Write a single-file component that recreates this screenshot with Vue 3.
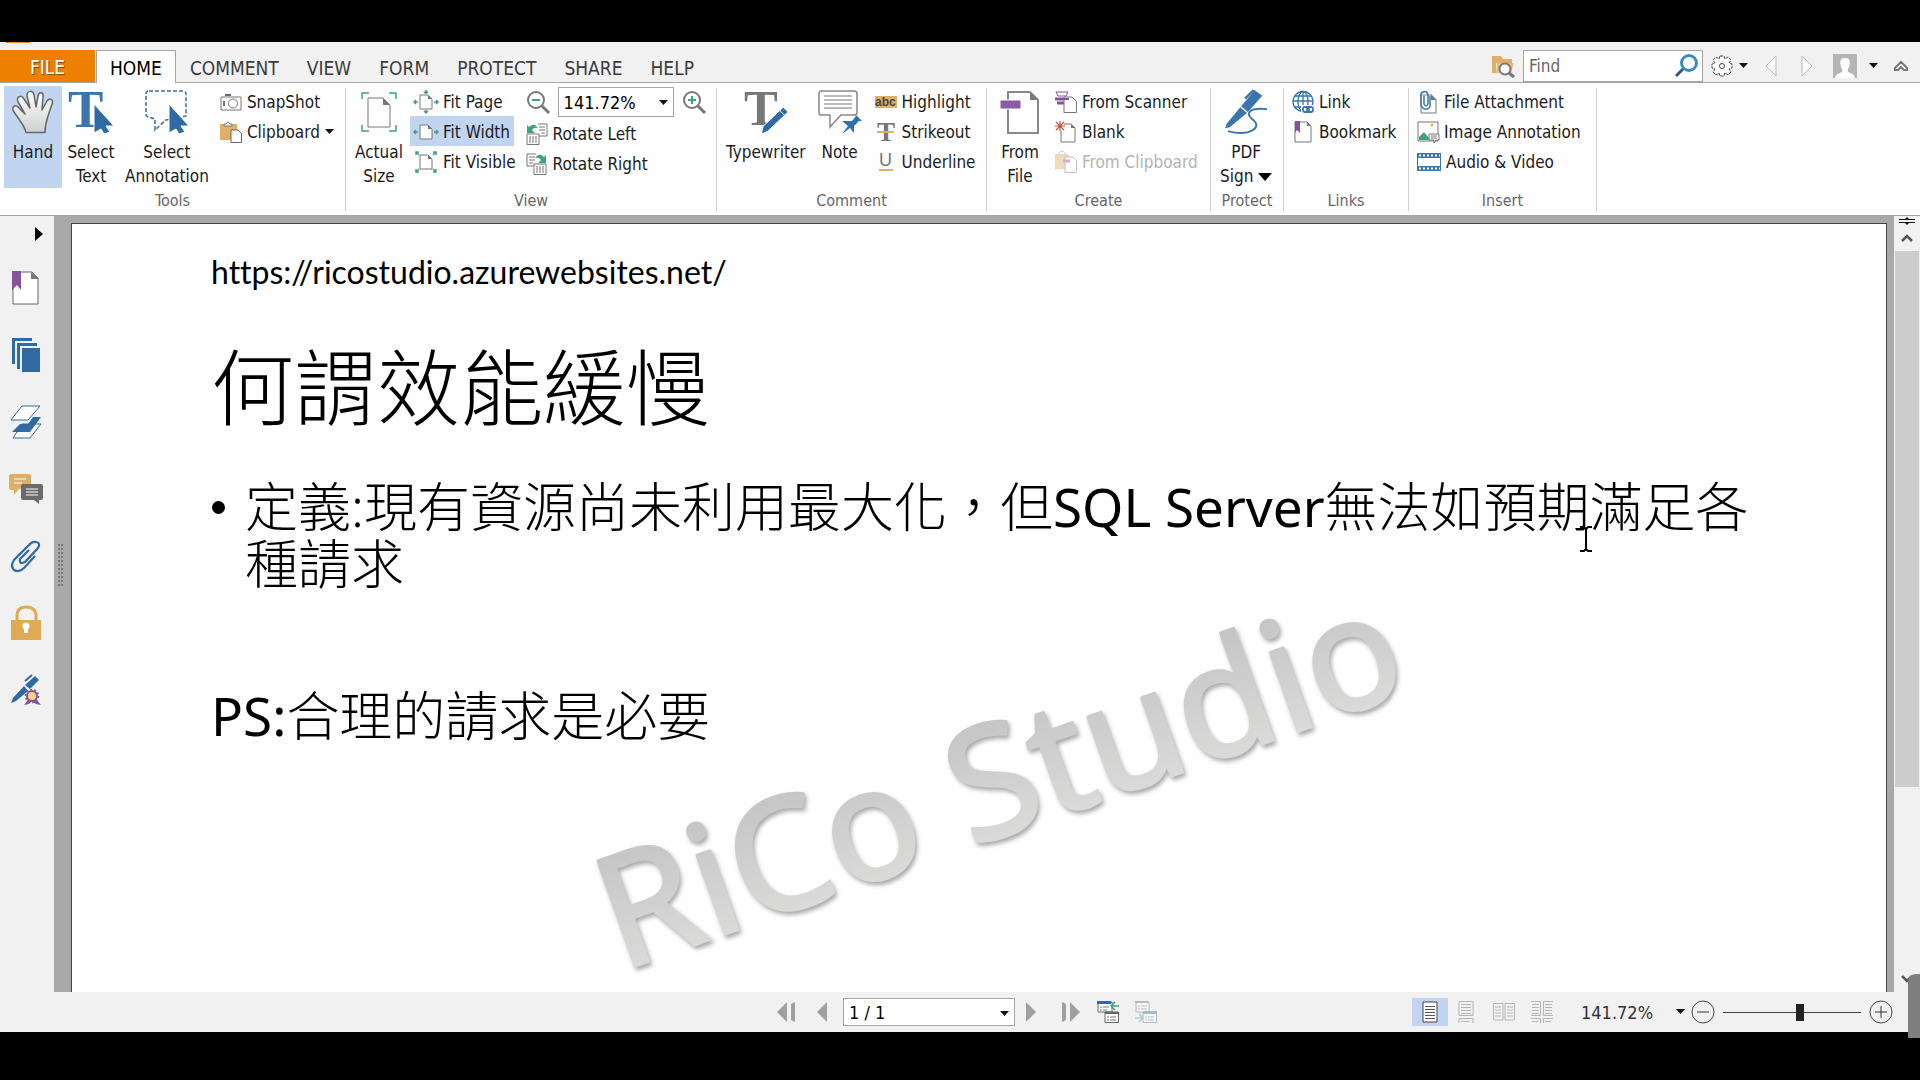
<script setup>
import { h, ref } from 'vue'

const tabs = ['HOME', 'COMMENT', 'VIEW', 'FORM', 'PROTECT', 'SHARE', 'HELP']
const activeTab = ref('HOME')
const zoom = ref(56)

const page = (x, y, w, h, c = 6) =>
  `<path d="M${x} ${y}h${w - c}l${c} ${c}v${h - c}h-${w}z" fill="#fff" stroke="#777"/><path d="M${x + w - c} ${y}v${c}h${c}z" fill="#777"/>`

const cursor = '<path d="M0 0L20 22H12L16 28L10 30L7 25L0 29Z" fill="#2f6aa3"/>'

const icons = {
  hand: { w: 42, h: 44, body: '<defs><linearGradient id="skin" x2="0" y2="1"><stop offset="0" stop-color="#fff"/><stop offset="1" stop-color="#cfd0d0"/></linearGradient></defs><path d="M14 42.500C12 34 7 30 2 22C-1 17 3 14 6 17L13 24L6 12C4 7 9 4 12 9L18 18L15 6C15 0 21 0 22 5L24 17L26 6C27 1 32 2 31 7L30 20L35 11C38 7 42 10 40 14L36 26C34 32 33 36 33 42.500Z" fill="url(#skin)" stroke="#666" stroke-width="1.500" stroke-linejoin="round"/>' },
  selectText: { w: 46, h: 44, body: `<text x="0" y="37" font-family="Liberation Serif, serif" font-weight="bold" font-size="53" fill="#3a76ac">T</text><g transform="translate(26 14)" stroke="#fff" stroke-width="1">${cursor}</g>` },
  selectNote: { w: 44, h: 44, body: `<path d="M4 1H38Q41 1 41 4V26L21 30L10 40V29L4 27Q1 27 1 24V4Q1 1 4 1Z" fill="none" stroke="#3a6f9c" stroke-width="1.500" stroke-dasharray="4 2"/><g transform="translate(24 14)" stroke="#fff" stroke-width="1">${cursor}</g>` },
  camera: { w: 22, h: 22, body: '<path d="M1 6H21V19H1Z" fill="#fff" stroke="#777"/><circle cx="13" cy="12.500" r="4.500" fill="none" stroke="#777"/><path d="M4 10v5" stroke="#777" stroke-width="2"/><path d="M5 5V3H11V5Z" fill="#85539b"/>' },
  clipboard: { w: 22, h: 22, body: '<path d="M0 3H17V19H0Z" fill="#deb067"/><path d="M4 5V3H6Q8-1 10 3H12V5Z" fill="#fff" stroke="#777"/><path d="M11 9h7l3.500 3.500v9H11z" fill="#fff" stroke="#666"/>' },
  actual: { w: 36, h: 44, body: `<path d="M1 9V3H8M28 3H35V9M35 35V41H28M8 41H1V35" fill="none" stroke="#41a184" stroke-width="1.500"/>${page(7, 8, 22, 29, 7)}` },
  fitPage: { w: 24, h: 22, body: `${page(6, 4, 12, 14, 4)}<path d="M0 11h4M20 11h4M12-1v4M12 19v4M2 9l-2 2 2 2M22 9l2 2-2 2M10 2l2-2 2 2M10 20l2 2 2-2" fill="none" stroke="#41a184" stroke-width="1.500"/>` },
  fitWidth: { w: 24, h: 22, body: `${page(6, 4, 12, 14, 4)}<path d="M0 11h4M20 11h4M2 9l-2 2 2 2M22 9l2 2-2 2" fill="none" stroke="#41a184" stroke-width="1.500"/>` },
  fitVisible: { w: 24, h: 22, body: `${page(6, 4, 12, 14, 4)}<path d="M2 4V1H5M2 1l3 3M19 1h3v3M22 1l-3 3M2 18v3h3M2 21l3-3M22 18v3h-3M22 21l-3-3" fill="none" stroke="#41a184" stroke-width="1.500"/>` },
  zoomOut: { w: 24, h: 24, body: '<circle cx="10" cy="10" r="8" fill="#fff" stroke="#777" stroke-width="2"/><path d="M16 16l7 7" stroke="#777" stroke-width="3"/><path d="M6 10h8" stroke="#41a184" stroke-width="2"/>' },
  zoomIn: { w: 24, h: 24, body: '<circle cx="10" cy="10" r="8" fill="#fff" stroke="#777" stroke-width="2"/><path d="M16 16l7 7" stroke="#777" stroke-width="3"/><path d="M6 10h8M10 6v8" stroke="#41a184" stroke-width="2"/>' },
  rotateLeft: { w: 22, h: 22, body: '<path d="M12 1H21V13H13" fill="#fff" stroke="#777"/><path d="M13 4h6M13 7h6M15 10h4" stroke="#777"/><path d="M1 11H13V21.500H1Z" fill="#fff" stroke="#777"/><path d="M4 13v7M7 13v7M10 13v7" stroke="#777"/><path d="M1 2V10H9L6 7Q8 4 12 5Q8-1 3 4Z" fill="#41a184"/>' },
  rotateRight: { w: 22, h: 22, body: '<path d="M10 1H1V13H8" fill="#fff" stroke="#777"/><path d="M3 4h6M3 7h6M3 10h4" stroke="#777"/><path d="M8 11H20V21.500H8Z" fill="#fff" stroke="#777"/><path d="M11 13v7M14 13v7M17 13v7" stroke="#777"/><path d="M20 2V10H12L15 7Q13 4 9 5Q13-1 18 4Z" fill="#41a184"/>' },
  typewriter: { w: 46, h: 46, body: '<text x="0" y="37" font-family="Liberation Serif, serif" font-weight="bold" font-size="53" fill="#777">T</text><path d="M18 46L20 38L41 18L46 23L25 43Z" fill="#2f6aa3" stroke="#fff"/><path d="M37 21l6 6" stroke="#fff"/>' },
  note: { w: 44, h: 44, body: '<path d="M3 1H36Q39 1 39 4V23Q39 25 36 25H23L12 37V25H3Q1 25 1 23V4Q1 1 3 1Z" fill="#fff" stroke="#888" stroke-width="1.500"/><path d="M6 6h28M6 10h28M6 14h28M6 18h28" stroke="#777"/><path d="M24 44L30 36L24 31L34 31L38 26L36 23L44 31L41 31L36 36V43L32 38Z" fill="#2c70ad"/>' },
  highlight: { w: 22, h: 22, body: '<path d="M0 5H22V17H0Z" fill="#deb067"/><text x="0" y="15" font-family="Liberation Sans, sans-serif" font-weight="bold" font-size="12" fill="#444">abc</text>' },
  strikeout: { w: 22, h: 22, body: '<text x="2" y="20" font-family="Liberation Serif, serif" font-weight="bold" font-size="27" fill="#777">T</text><path d="M2 11h17" stroke="#deb067" stroke-width="2"/>' },
  underline: { w: 22, h: 22, body: '<text x="4" y="15" font-family="Liberation Sans, sans-serif" font-size="18" fill="#777">U</text><path d="M4 19h14" stroke="#deb067" stroke-width="2"/>' },
  fromFile: { w: 38, h: 44, body: '<path d="M7 2H29L37 10V43H7Z" fill="#fff" stroke="#888" stroke-width="2"/><path d="M29 2V10H37Z" fill="#777"/><path d="M-1 10H20V19H-1Z" fill="#8c5ba5" stroke="#fff"/>' },
  scanner: { w: 22, h: 22, body: '<path d="M1 1H13L11 5H3Z" fill="#fff" stroke="#85539b"/><path d="M0 8H14M2 12H9" stroke="#85539b" stroke-width="3"/><path d="M9 6h8l4.500 4.500v11H9z" fill="#fff" stroke="#777"/><path d="M8 8H14" stroke="#85539b" stroke-width="2"/>' },
  blank: { w: 22, h: 22, body: '<path d="M6 3h10l4 4v14H6z" fill="#fff" stroke="#777"/><path d="M16 3v4h4z" fill="#777"/><path d="M0 0H9V10H0Z" fill="#fff"/><path d="M5 0v10M0 5h10M1 1l8 8M9 1l-8 8" stroke="#c3563c" stroke-width="1.200"/>' },
  fromClip: { w: 22, h: 22, body: '<g opacity=".45"><path d="M0 3H14V18H0Z" fill="#deb067"/><path d="M4 4V2Q7-2 10 2V4Z" fill="#fff" stroke="#999"/><path d="M10 6h8l3.500 3.500v12H10z" fill="#fff" stroke="#777"/><path d="M8 10H15" stroke="#85539b" stroke-width="3"/></g>' },
  sign: { w: 46, h: 46, body: '<path d="M32 0L40 6L25 23L18 17Z" fill="#3a76ac"/><path d="M17 18L24 24L6 39L1 40L3 35Z" fill="#3a76ac"/><path d="M22 9L31 0" stroke="#3a76ac" stroke-width="2.500"/><path d="M45 20C25 18 23 25 29 30C42 39 27 49 4 43" fill="none" stroke="#3a76ac" stroke-width="2"/>' },
  link: { w: 22, h: 22, body: '<g fill="none" stroke="#3a76ac" stroke-width="1.300"><circle cx="11" cy="10.500" r="10"/><ellipse cx="11" cy="10.500" rx="5" ry="10"/><path d="M11 0V21M1 10H21M3 5H19M3 16H14"/></g><path d="M9 14H23V23H9Z" fill="#fff"/><g fill="none" stroke="#3a76ac" stroke-width="1.800"><rect x="11" y="16" width="6" height="5" rx="2"/><rect x="15" y="16" width="6" height="5" rx="2"/></g>' },
  bookmark: { w: 22, h: 22, body: '<path d="M3 1h12l4 4v16H3z" fill="#fff" stroke="#777"/><path d="M15 1v4h4z" fill="#777"/><path d="M3 0H8V12L5 9L3 12Z" fill="#85539b"/>' },
  attach: { w: 22, h: 22, body: '<path d="M4 4h10l5 5v13H4z" fill="#fff" stroke="#777"/><path d="M14 3v6h6z" fill="#777"/><path d="M7 5V13Q9 17 11 13V4Q10-1 6 1Q3 2 4 6V14Q6 19 10 18Q14 17 13 12V5" fill="none" stroke="#3a76ac" stroke-width="1.500"/>' },
  image: { w: 22, h: 22, body: '<path d="M1 1H21V20H1Z" fill="#fff" stroke="#777"/><path d="M2 19V16L7 11L12 17V19Z" fill="#41a184"/><circle cx="15" cy="4" r="1.500" fill="#deb067"/><path d="M12 13H22V19H19L17 22V19H12Z" fill="#fff" stroke="#777"/><path d="M14 15h6M14 17h6" stroke="#777"/>' },
  video: { w: 24, h: 22, body: '<path d="M0 2H24V20H0Z" fill="#3a76ac"/><path d="M1 7H23V15H1Z" fill="#fff"/><path d="M2 4.500H23M2 17.500H23" stroke="#fff" stroke-width="2" stroke-dasharray="2 2"/>' },
  folder: { w: 24, h: 24, body: '<path d="M1 2H10L12 5H21V9H5V19H1Z" fill="#deb067"/><path d="M6 9H23L20 19H5Z" fill="#e5bd7e"/><circle cx="14" cy="15" r="5.500" fill="#fff" stroke="#777" stroke-width="2"/><path d="M18 19l5 4" stroke="#777" stroke-width="3"/>' },
  search: { w: 24, h: 24, body: '<path d="M1 22L9 14" stroke="#2d568d" stroke-width="3"/><circle cx="14" cy="9" r="7.500" fill="#fff" stroke="#3b8fbd" stroke-width="3"/>' },
  gear: { w: 22, h: 22, body: '<path d="M9 1H13L14 4L17 2L20 5L18 8L21 9V13L18 14L20 17L17 20L14 18L13 21H9L8 18L5 20L2 17L4 14L1 13V9L4 8L2 5L5 2L8 4Z" fill="#fff" stroke="#444" stroke-dasharray="3 1" stroke-linejoin="round"/><circle cx="11" cy="11" r="2.500" fill="#fff" stroke="#444"/>' },
  back: { w: 14, h: 22, body: '<path d="M12 1V21L2 11Z" fill="#fafafa" stroke="#bbb"/>' },
  forward: { w: 14, h: 22, body: '<path d="M2 1V21L12 11Z" fill="#fafafa" stroke="#bbb"/>' },
  user: { w: 24, h: 24, body: '<path d="M0 0H24V24H0Z" fill="#b5b5b5"/><path d="M2 24Q2 20 9 18Q10 16 8 13Q5 4 12 4Q19 4 16 13Q14 16 15 18Q22 20 22 24Z" fill="#fff"/>' },
  collapse: { w: 16, h: 14, body: '<path d="M2 9L8 3L14 9V11H11L8 8L5 11H2Z" fill="#fff" stroke="#777" stroke-width="2"/>' },
  arrow: { w: 10, h: 6, body: '<path d="M0 0H9L4.500 5Z" fill="#111"/>' },
  bigArrow: { w: 14, h: 9, body: '<path d="M0 1H14L7 9Z" fill="#000"/>' },
  sideMark: { w: 32, h: 34, body: '<path d="M3 1H22L28 7V33H3Z" fill="#fff" stroke="#666"/><path d="M21 1V8H29Z" fill="#777"/><path d="M2 0H11V19L7 14L2 19Z" fill="#85539b"/>' },
  sidePages: { w: 32, h: 34, body: '<path d="M12 10H30V34H12Z" fill="#2f6aa3"/><path d="M8.500 31V6.500H27M3.500 26V1.500H22" fill="none" stroke="#2f6aa3" stroke-width="3"/>' },
  sideLayers: { w: 32, h: 34, body: '<path d="M12 1H30L18 15H1Z" fill="#fff" stroke="#2f6aa3"/><path d="M12 19H31L20 33H3L7 27" fill="#fff" stroke="#2f6aa3"/><path d="M2 27L10 19H18L23 12H31L20 27Z" fill="#2f6aa3"/>' },
  sideComments: { w: 36, h: 30, body: '<path d="M3 0H21Q23 0 23 2V15H11L6 21V16H3Q1 16 1 14V2Q1 0 3 0Z" fill="#deb067"/><path d="M6 5h12M6 9h8" stroke="#fff"/><path d="M15 10H33Q35 10 35 12V24Q35 26 33 26H31V30L26 26H15Q13 26 13 24V12Q13 10 15 10Z" fill="#6b6b6b"/><path d="M18 15h12M18 18h12M18 21h12" stroke="#fff"/>' },
  sideClip: { w: 32, h: 32, body: '<path d="M19 10L10 19Q9 25 15 22L28 8Q31 3 26 2Q22 1 19 5L4 20Q0 26 4 30Q9 33 14 28L25 16" fill="none" stroke="#2f6aa3" stroke-width="2.200"/>' },
  sideLock: { w: 32, h: 34, body: '<path d="M7 15V10Q7 1 16 1Q26 1 26 10V15" fill="none" stroke="#deaa55" stroke-width="3"/><path d="M1 14H31V34H1Z" fill="#deaa55"/><circle cx="16" cy="20" r="3.500" fill="#fff"/><path d="M14 21H18V27H14Z" fill="#fff"/>' },
  sideSign: { w: 32, h: 32, body: '<path d="M25 2L29 6L20 15L15 11Z" fill="#2f6aa3"/><path d="M14 12L18 17L6 27L1 29L3 24Z" fill="#2f6aa3"/><path d="M15 7L22 1" stroke="#2f6aa3" stroke-width="2"/><path d="M18 26L14 31L19 30L22 27L26 30L31 31L26 25Z" fill="#85539b"/><circle cx="22" cy="22" r="5" fill="#f5d77c" stroke="#85539b" stroke-width="2"/><circle cx="22" cy="22" r="6.500" fill="none" stroke="#85539b" stroke-width="1.500" stroke-dasharray="2 2"/>' },
  first: { w: 20, h: 22, body: '<path d="M11 1V21L1 11ZM15 3L19 1V21L15 19Z" fill="#a0a0a0"/>' },
  prev: { w: 12, h: 22, body: '<path d="M11 1V21L1 11Z" fill="#a0a0a0"/>' },
  next: { w: 12, h: 22, body: '<path d="M1 1V21L11 11Z" fill="#a0a0a0"/>' },
  last: { w: 20, h: 22, body: '<path d="M9 1V21L19 11ZM1 1L5 3V19L1 21Z" fill="#a0a0a0"/>' },
  prevView: { w: 22, h: 22, body: '<path d="M1 1H15V11H1Z" fill="#fff" stroke="#666"/><path d="M0 0H14V3H0Z" fill="#2f6aa3"/><path d="M3 6h2M6 6h6M3 9h2M6 9h4" stroke="#777"/><path d="M8 11H21.500V21.500H8Z" fill="#fff" stroke="#666"/><path d="M8 12H21" stroke="#666" stroke-width="2"/><path d="M10 16h2M13 16h6M10 19h2M13 19h6" stroke="#777"/><path d="M22 5H14M18 1L14 5L18 9" fill="none" stroke="#41a184" stroke-width="1.500"/>' },
  nextView: { w: 22, h: 22, body: '<g opacity=".4"><path d="M1 1H14V11H1Z" fill="#fff" stroke="#666"/><path d="M0 1H14" stroke="#666" stroke-width="2"/><path d="M3 5h2M6 5h6M3 8h2M6 8h6" stroke="#777"/><path d="M8 11H21.500V21.500H8Z" fill="#fff" stroke="#666"/><path d="M8 10H22V13H8Z" fill="#2f6aa3"/><path d="M10 16h2M13 16h6M10 19h2M13 19h6" stroke="#777"/><path d="M0 17H7M4 13L8 17L4 21" fill="none" stroke="#41a184" stroke-width="1.500"/></g>' },
  single: { w: 16, h: 22, body: '<path d="M1 1H15V21H1Z" fill="#fff" stroke="#444"/><path d="M3 5.500h10M3 8.500h10M3 11.500h10M3 14.500h10M3 17.500h10" stroke="#555"/>' },
  continuous: { w: 16, h: 22, body: '<g fill="none" stroke="#b5b5b5"><path d="M1 .5H15V14.500H1ZM1 22V17.500H15V22M3 3.500h10M3 6.500h10M3 9.500h10M3 12.500h10M3 20.500h8"/></g>' },
  facing: { w: 22, h: 22, body: '<g fill="none" stroke="#b5b5b5"><path d="M.5 2.500H10V19H.5ZM12 2.500H21.500V19H12ZM2 6h6M2 9h6M2 12h6M2 15h6M14 6h6M14 9h6M14 12h6M14 15h6"/></g>' },
  facingCont: { w: 22, h: 22, body: '<g fill="none" stroke="#b5b5b5"><path d="M0 .5H9.500V14.500H0M22 .5H12.500V14.500H22M0 17.500H9.500V22M22 17.500H12.500V22M1 3.500h7M1 6.500h7M1 9.500h7M1 12.500h7M1 20.500h6M14 3.500h7M14 6.500h7M14 9.500h7M14 12.500h7M14 20.500h6"/></g>' },
  minus: { w: 24, h: 24, body: '<circle cx="12" cy="12" r="11" fill="none" stroke="#444"/><path d="M6 12h12" stroke="#333"/>' },
  plus: { w: 24, h: 24, body: '<circle cx="12" cy="12" r="11" fill="none" stroke="#444"/><path d="M6 12h12M12 6v12" stroke="#333"/>' },
  split: { w: 16, h: 8, body: '<path d="M0 2.500H16M0 5.500H16" stroke="#111"/><path d="M8 0L10 2H6ZM8 8L10 6H6Z" fill="#111"/>' },
  up: { w: 14, h: 10, body: '<path d="M2 8L7 3L12 8" fill="none" stroke="#555" stroke-width="2.500"/>' },
  down: { w: 14, h: 10, body: '<path d="M2 2L7 7L12 2" fill="none" stroke="#555" stroke-width="2.500"/>' },
}

const Icon = (props) => {
  const icon = icons[props.name]
  return h('svg', {
    width: icon.w,
    height: icon.h,
    viewBox: `0 0 ${icon.w} ${icon.h}`,
    innerHTML: icon.body,
    'aria-hidden': 'true',
  })
}
Icon.props = ['name']

const groups = [
  {
    name: 'Tools',
    big: [
      { icon: 'hand', lines: ['Hand'], active: true },
      { icon: 'selectText', lines: ['Select', 'Text'] },
      { icon: 'selectNote', lines: ['Select', 'Annotation'] },
    ],
    small: [
      { icon: 'camera', label: 'SnapShot' },
      { icon: 'clipboard', label: 'Clipboard', menu: true },
    ],
  },
  {
    name: 'View',
    big: [{ icon: 'actual', lines: ['Actual', 'Size'] }],
    small: [
      { icon: 'fitPage', label: 'Fit Page' },
      { icon: 'fitWidth', label: 'Fit Width', active: true },
      { icon: 'fitVisible', label: 'Fit Visible' },
    ],
    zoom: true,
  },
  {
    name: 'Comment',
    big: [
      { icon: 'typewriter', lines: ['Typewriter'] },
      { icon: 'note', lines: ['Note'] },
    ],
    small: [
      { icon: 'highlight', label: 'Highlight' },
      { icon: 'strikeout', label: 'Strikeout' },
      { icon: 'underline', label: 'Underline' },
    ],
  },
  {
    name: 'Create',
    big: [{ icon: 'fromFile', lines: ['From', 'File'] }],
    small: [
      { icon: 'scanner', label: 'From Scanner' },
      { icon: 'blank', label: 'Blank' },
      { icon: 'fromClip', label: 'From Clipboard', disabled: true },
    ],
  },
  { name: 'Protect', big: [{ icon: 'sign', lines: ['PDF', 'Sign'], menu: true }], small: [] },
  {
    name: 'Links',
    big: [],
    small: [
      { icon: 'link', label: 'Link' },
      { icon: 'bookmark', label: 'Bookmark' },
    ],
  },
  {
    name: 'Insert',
    big: [],
    small: [
      { icon: 'attach', label: 'File Attachment' },
      { icon: 'image', label: 'Image Annotation' },
      { icon: 'video', label: 'Audio & Video' },
    ],
  },
]

const panels = [
  { icon: 'sideMark', label: 'Bookmarks' },
  { icon: 'sidePages', label: 'Pages' },
  { icon: 'sideLayers', label: 'Layers' },
  { icon: 'sideComments', label: 'Comments' },
  { icon: 'sideClip', label: 'Attachments' },
  { icon: 'sideLock', label: 'Security' },
  { icon: 'sideSign', label: 'Signatures' },
]

const layouts = [
  { icon: 'single', label: 'Single page' },
  { icon: 'continuous', label: 'Continuous' },
  { icon: 'facing', label: 'Facing' },
  { icon: 'facingCont', label: 'Continuous facing' },
]
</script>

<template>
  <div class="screen">
    <header class="tabbar">
      <button class="file">FILE</button>
      <nav class="tabs">
        <button
          v-for="tab in tabs"
          :key="tab"
          :class="{ active: tab === activeTab }"
          @click="activeTab = tab"
        >
          {{ tab }}
        </button>
      </nav>
      <div class="actions">
        <button aria-label="Search folder"><Icon name="folder" /></button>
        <div class="find">
          <input type="text" placeholder="Find" aria-label="Find" />
          <button aria-label="Search"><Icon name="search" /></button>
        </div>
        <button class="with-arrow" aria-label="Settings"><Icon name="gear" /><Icon name="arrow" /></button>
        <button class="step" aria-label="Back"><Icon name="back" /></button>
        <button class="step" aria-label="Forward"><Icon name="forward" /></button>
        <button class="with-arrow account" aria-label="Account"><Icon name="user" /><Icon name="arrow" /></button>
        <button aria-label="Collapse ribbon"><Icon name="collapse" /></button>
      </div>
    </header>

    <section class="ribbon">
      <div v-for="group in groups" :key="group.name" class="group" :class="group.name.toLowerCase()">
        <div class="items">
          <button v-for="item in group.big" :key="item.icon" class="big" :class="{ active: item.active }">
            <Icon :name="item.icon" />
            <span v-for="(line, i) in item.lines" :key="line">
              {{ line }}
              <Icon v-if="item.menu && i === 1" name="bigArrow" />
            </span>
          </button>
          <div v-if="group.small.length" class="small-list">
            <button
              v-for="item in group.small"
              :key="item.label"
              class="small"
              :class="{ active: item.active }"
              :disabled="item.disabled"
            >
              <Icon :name="item.icon" />
              <span>{{ item.label }}</span>
              <Icon v-if="item.menu" name="arrow" />
            </button>
          </div>
          <div v-if="group.zoom" class="zoom-list">
            <div class="zoom-row">
              <button aria-label="Zoom out"><Icon name="zoomOut" /></button>
              <div class="select">
                <select aria-label="Zoom level"><option>141.72%</option></select>
                <Icon name="arrow" />
              </div>
              <button aria-label="Zoom in"><Icon name="zoomIn" /></button>
            </div>
            <button class="small"><Icon name="rotateLeft" /><span>Rotate Left</span></button>
            <button class="small"><Icon name="rotateRight" /><span>Rotate Right</span></button>
          </div>
        </div>
        <p>{{ group.name }}</p>
      </div>
    </section>

    <main class="workspace">
      <aside class="sidebar">
        <button class="expand" aria-label="Expand panel"></button>
        <button v-for="panel in panels" :key="panel.icon" class="panel" :aria-label="panel.label">
          <Icon :name="panel.icon" />
        </button>
      </aside>
      <div class="splitter"></div>
      <article class="page">
        <a href="https://ricostudio.azurewebsites.net/">https://ricostudio.azurewebsites.net/</a>
        <h1>何謂效能緩慢</h1>
        <ul>
          <li>定義:現有資源尚未利用最大化，但<span>SQL Server</span>無法如預期滿足各種請求</li>
        </ul>
        <p><span>PS:</span>合理的請求是必要</p>
        <svg class="watermark" width="900" height="400" viewBox="0 0 900 400">
          <defs>
            <linearGradient id="metal" x2="0" y2="1">
              <stop offset="0.2" stop-color="#c4c4c4" />
              <stop offset="0.9" stop-color="#dededd" />
            </linearGradient>
          </defs>
          <text x="0" y="0" transform="translate(49 391) rotate(-19.500)">RiCo Studio</text>
        </svg>
        <svg class="caret" width="14" height="26" viewBox="0 0 14 26">
          <path d="M1 1H5L7 3L9 1H13M7 3V23M1 25H5L7 23L9 25H13" fill="none" stroke="#000" stroke-width="2" />
        </svg>
      </article>
      <div class="scrollbar">
        <Icon name="split" />
        <button aria-label="Scroll up"><Icon name="up" /></button>
        <div class="track"><div class="thumb"></div></div>
        <button aria-label="Scroll down"><Icon name="down" /></button>
      </div>
    </main>

    <footer class="status">
      <div class="pager">
        <button aria-label="First page"><Icon name="first" /></button>
        <button aria-label="Previous page"><Icon name="prev" /></button>
        <div class="select">
          <select aria-label="Page"><option>1 / 1</option></select>
          <Icon name="arrow" />
        </div>
        <button aria-label="Next page"><Icon name="next" /></button>
        <button aria-label="Last page"><Icon name="last" /></button>
        <button aria-label="Previous view"><Icon name="prevView" /></button>
        <button aria-label="Next view"><Icon name="nextView" /></button>
      </div>
      <div class="layouts">
        <button v-for="(item, i) in layouts" :key="item.icon" :class="{ active: i === 0 }" :aria-label="item.label">
          <Icon :name="item.icon" />
        </button>
      </div>
      <div class="select plain">
        <select aria-label="Zoom"><option>141.72%</option></select>
        <Icon name="arrow" />
      </div>
      <div class="slider">
        <button aria-label="Zoom out"><Icon name="minus" /></button>
        <input v-model="zoom" type="range" min="0" max="100" aria-label="Zoom slider" />
        <button aria-label="Zoom in"><Icon name="plus" /></button>
      </div>
      <div class="handle"></div>
    </footer>
  </div>
</template>

<style>
body {
  background: #000;
}
</style>

<style scoped>
.screen {
  box-sizing: border-box;
  display: flex;
  flex-direction: column;
  height: 100vh;
  padding: 42px 0 48px;
  background: #000;
  color: #1c1c1c;
  font-family: 'DejaVu Sans Condensed', 'Noto Sans', sans-serif;
  font-size: 17px;
}

button,
input,
select {
  margin: 0;
  padding: 0;
  border: 0;
  background: none;
  color: inherit;
  font: inherit;
}

button {
  display: flex;
  align-items: center;
  white-space: nowrap;
}

svg {
  display: block;
  flex: none;
  overflow: visible;
}

.tabbar {
  position: relative;
  display: flex;
  align-items: flex-end;
  height: 40px;
  border-bottom: 1px solid #a5a5a5;
  background: #f1f1f1;

  &::before {
    content: '';
    position: absolute;
    top: 0;
    left: 6px;
    width: 24px;
    height: 1px;
    background: #e8852b;
  }

  & .file {
    justify-content: center;
    width: 95px;
    height: 32px;
    padding-top: 2px;
    background: #ee8000;
    color: #fff;
    font-size: 19px;
    text-shadow: 1px 1px 1px #7a4a10;
  }
}

.tabs {
  display: flex;
  margin-left: 1px;

  & button {
    height: 33px;
    margin-bottom: -1px;
    padding: 2px 13px 0;
    border: 1px solid transparent;
    border-bottom: 0;
    color: #3c3c3c;
    font-size: 19px;
  }

  & .active {
    border-color: #a5a5a5;
    background: #fefefe;
    color: #000;
  }
}

.actions {
  display: flex;
  align-items: center;
  gap: 8px;
  height: 32px;
  margin-left: auto;
  padding-right: 11px;

  & .with-arrow {
    gap: 6px;
  }

  & .step {
    padding: 0 7px;
  }

  & .account {
    gap: 12px;
    margin: 0 6px 0 4px;
  }
}

.find {
  box-sizing: border-box;
  display: flex;
  align-items: center;
  width: 180px;
  height: 32px;
  padding: 0 3px 0 5px;
  border: 1px solid #a5a5a5;
  background: #fff;

  & input {
    flex: 1;
    min-width: 0;
    outline: 0;
  }

  & input::placeholder {
    color: #666;
    opacity: 1;
  }
}

.ribbon {
  display: flex;
  height: 132px;
  border-bottom: 1px solid #a5a5a5;
  background: #fefefe;
}

.group {
  box-sizing: border-box;
  display: flex;
  flex-direction: column;
  justify-content: space-between;
  margin: 5px 0 4px;
  padding: 0 4px;
  border-right: 1px solid #cfcfcf;

  & p {
    margin: 0;
    color: #666;
    font-size: 16px;
    line-height: 20px;
    text-align: center;
  }
}

.items {
  display: flex;
  margin-top: -2px;
}

.tools {
  width: 346px;
}

.view {
  width: 371px;
}

.comment {
  width: 270px;
}

.create {
  width: 224px;
}

.protect {
  width: 73px;
}

.links {
  width: 125px;
}

.insert {
  width: 188px;
}

.big {
  flex-direction: column;
  min-width: 58px;
  height: 102px;
  padding: 4px 5px 0;
  line-height: 24px;

  & > svg {
    height: 44px;
    margin-bottom: 6px;
  }

  & span {
    display: flex;
    align-items: center;
    gap: 5px;
  }
}

.active {
  background: #c2d5f0;
}

.small-list {
  display: flex;
  flex-direction: column;
  align-items: flex-start;
  margin-left: 2px;
}

.links,
.insert {
  & .small-list {
    margin-left: 0;
  }
}

.small {
  gap: 5px;
  height: 30px;
  padding: 1px 4px 0;

  &:disabled {
    color: #b3b3b3;
  }
}

.zoom-list {
  margin-left: 2px;
}

.zoom-row {
  display: flex;
  align-items: center;
  gap: 8px;
  height: 32px;
  padding-left: 4px;
}

.select {
  position: relative;
  box-sizing: border-box;
  width: 116px;
  height: 30px;
  border: 1px solid #a5a5a5;
  background: #fff;
  color: #000;

  & select {
    width: 100%;
    height: 100%;
    padding-left: 5px;
    appearance: none;
    outline: 0;
    font-size: 18px;
  }

  & svg {
    position: absolute;
    top: 12px;
    right: 4px;
    pointer-events: none;
  }
}

.workspace {
  display: flex;
  flex: 1;
  min-height: 0;
  background: #a9a9a9;
}

.sidebar {
  display: flex;
  flex-direction: column;
  width: 54px;
  background: #f1f1f1;
}

.expand {
  align-self: flex-end;
  width: 0;
  height: 0;
  margin: 11px 11px 13px 0;
  border: 7px solid transparent;
  border-right: 0;
  border-left: 8px solid #000;
}

.panel {
  justify-content: center;
  height: 67px;
  padding-right: 2px;
}

.splitter {
  align-self: center;
  width: 5px;
  height: 44px;
  margin: 0 6px 76px 4px;
  background: radial-gradient(circle at 1px 1px, #777 1px, transparent 1px) 0 0 / 3px 4px;
}

.page {
  position: relative;
  flex: 1;
  min-width: 0;
  margin: 7px 7px 0 2px;
  padding: 0 120px 0 139px;
  border: 1px solid #444;
  border-bottom: 0;
  background: #fefefe;
  color: #000;
  font-family: 'Noto Sans', 'Noto Sans CJK TC', sans-serif;
  font-size: 53px;
  font-weight: 300;
  line-height: 57px;

  & a {
    display: block;
    margin: 28px 0 0;
    color: #000;
    font-family: Lato, sans-serif;
    font-size: 32px;
    font-variant-ligatures: none;
    font-weight: 400;
    line-height: 40px;
    text-decoration: none;
  }

  & h1 {
    margin: 45px 0 0;
    font-size: 83px;
    font-weight: 300;
    line-height: 100px;
  }

  & ul {
    margin: 41px 0 0;
    padding: 0;
    list-style: none;
  }

  & li {
    position: relative;
    padding-left: 34px;
  }

  & li::before {
    content: '';
    position: absolute;
    top: 23px;
    left: 1px;
    width: 13px;
    height: 13px;
    border-radius: 50%;
    background: #000;
  }

  & span {
    font-weight: 400;
  }

  & p {
    margin: 95px 0 0;
  }
}

.watermark {
  position: absolute;
  top: 356px;
  left: 500px;
  filter: drop-shadow(2px 3px 2px #00000055);

  & text {
    fill: url(#metal);
    stroke: url(#metal);
    stroke-width: 3px;
    stroke-linejoin: round;
    font-family: 'Noto Sans', sans-serif;
    font-size: 156px;
    font-weight: 400;
  }
}

.caret {
  position: absolute;
  top: 302px;
  left: 1507px;
}

.scrollbar {
  display: flex;
  flex-direction: column;
  align-items: center;
  width: 26px;
  background: #f1f1f1;

  & > svg {
    margin-top: 1px;
  }

  & button {
    height: 26px;
  }
}

.track {
  flex: 1;
  align-self: stretch;
  padding: 0 1px;
}

.thumb {
  height: 75%;
  background: #cdcdcd;
}

.status {
  position: relative;
  display: flex;
  align-items: center;
  justify-content: flex-end;
  height: 40px;
  padding-right: 27px;
  background: #f1f1f1;

  & .plain {
    width: 114px;
    margin: 0 1px 0 16px;
    border: 0;
    background: none;
    color: #333;
  }
}

.pager {
  display: flex;
  align-items: center;
  gap: 16px;
  margin-right: auto;
  padding-left: 776px;

  & button:first-child {
    margin-right: 4px;
  }

  & button:nth-child(5) {
    margin-left: 8px;
  }

  & .select {
    width: 172px;
    height: 28px;
    margin: 0 -6px 0 -1px;
  }
}

.layouts {
  display: flex;
  gap: 2px;

  & button {
    justify-content: center;
    width: 36px;
    height: 28px;
  }

  & .active {
    margin-right: -2px;
  }
}

.slider {
  display: flex;
  align-items: center;
  gap: 8px;

  & input {
    width: 138px;
    height: 20px;
    appearance: none;
    background: linear-gradient(#444, #444) center / 100% 1px no-repeat;
  }

  & input::-webkit-slider-thumb {
    width: 8px;
    height: 17px;
    appearance: none;
    background: #222;
  }
}

.handle {
  position: absolute;
  top: -18px;
  right: 0;
  width: 12px;
  height: 64px;
  border-radius: 8px 0 0 0;
  background: #7f7f7f;
}
</style>
